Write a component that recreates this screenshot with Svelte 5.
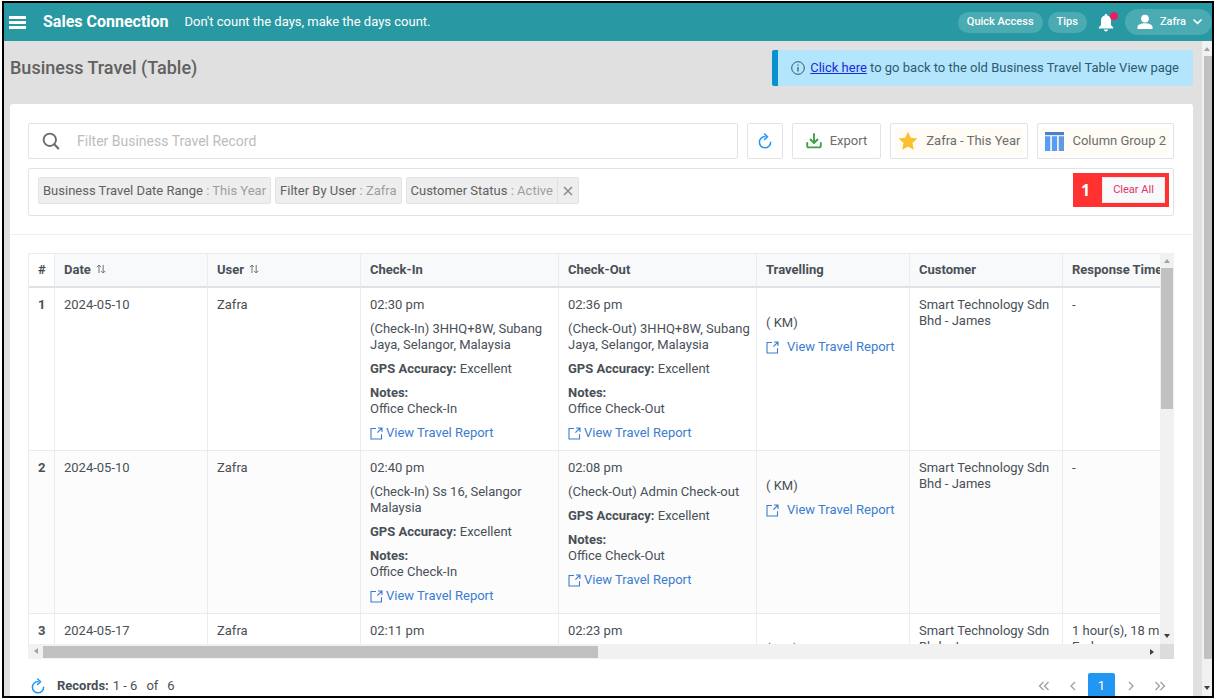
<script lang="ts">
  interface Visit {
    time: string;
    place?: string;
    note?: string;
  }
  interface TravelRecord {
    id: number;
    date: string;
    user: string;
    checkIn: Visit;
    checkOut: Visit;
    customer: string;
    response: string[];
  }

  const columns = [
    { label: '#', width: 26 },
    { label: 'Date', width: 153, sortable: true },
    { label: 'User', width: 153, sortable: true },
    { label: 'Check-In', width: 198 },
    { label: 'Check-Out', width: 198 },
    { label: 'Travelling', width: 153 },
    { label: 'Customer', width: 153 },
    { label: 'Response Time', width: 198 },
  ];
  const tableWidth = columns.reduce((sum, c) => sum + c.width, 0);

  const records: TravelRecord[] = [
    {
      id: 1,
      date: '2024-05-10',
      user: 'Zafra',
      checkIn: { time: '02:30 pm', place: '(Check-In) 3HHQ+8W, Subang Jaya, Selangor, Malaysia', note: 'Office Check-In' },
      checkOut: { time: '02:36 pm', place: '(Check-Out) 3HHQ+8W, Subang Jaya, Selangor, Malaysia', note: 'Office Check-Out' },
      customer: 'Smart Technology Sdn Bhd - James',
      response: ['-'],
    },
    {
      id: 2,
      date: '2024-05-10',
      user: 'Zafra',
      checkIn: { time: '02:40 pm', place: '(Check-In) Ss 16, Selangor Malaysia', note: 'Office Check-In' },
      checkOut: { time: '02:08 pm', place: '(Check-Out) Admin Check-out', note: 'Office Check-Out' },
      customer: 'Smart Technology Sdn Bhd - James',
      response: ['-'],
    },
    {
      id: 3,
      date: '2024-05-17',
      user: 'Zafra',
      checkIn: { time: '02:11 pm' },
      checkOut: { time: '02:23 pm' },
      customer: 'Smart Technology Sdn Bhd - James',
      response: ['1 hour(s), 18 minute(s)', 'Early'],
    },
  ];

  let filters = $state([
    { name: 'Business Travel Date Range', value: 'This Year', removable: false },
    { name: 'Filter By User', value: 'Zafra', removable: false },
    { name: 'Customer Status', value: 'Active', removable: true },
  ]);
  let query = $state('');

  function removeFilter(name: string) {
    filters = filters.filter((f) => f.name !== name);
  }
  function clearAll() {
    filters = filters.filter((f) => !f.removable);
  }
</script>

{#snippet refreshIcon()}
  <svg class="refresh-icon" viewBox="0 0 14 16" width="14" height="16" aria-hidden="true">
    <path d="M7 3.6A5.6 5.6 0 1 0 12.6 9.2" fill="none" stroke="currentColor" stroke-width="1.5" stroke-linecap="round" />
    <path d="M6.6 1l3 2.7-3 2.7" fill="none" stroke="currentColor" stroke-width="1.5" stroke-linejoin="round" stroke-linecap="round" />
  </svg>
{/snippet}

{#snippet reportLink(wide: boolean)}
  <a class="report" class:wide href="#report">
    <svg viewBox="0 0 13 13" width="13" height="13" aria-hidden="true">
      <path d="M6 1.5H1V12H11.500V7.200M8 1h4v4M12 1L7.400 5.600" fill="none" stroke="currentColor" stroke-width="1.100" />
    </svg>
    <span>View Travel Report</span>
  </a>
{/snippet}

{#snippet visit(v: Visit)}
  <div class="stack">
    <div>{v.time}</div>
    {#if v.place}
      <div>{v.place}</div>
      <div><b>GPS Accuracy:</b> Excellent</div>
      <div><b>Notes:</b><br />{v.note}</div>
      {@render reportLink(false)}
    {/if}
  </div>
{/snippet}

<div class="window">
  <header class="topbar">
    <button type="button" class="menu" aria-label="Menu"><i></i><i></i><i></i></button>
    <strong class="brand">Sales Connection</strong>
    <span class="motto">Don't count the days, make the days count.</span>
    <div class="actions">
      <button type="button" class="pill">Quick Access</button>
      <button type="button" class="pill">Tips</button>
      <button type="button" class="bell" aria-label="Notifications">
        <svg viewBox="0 0 16 19" width="16" height="19" aria-hidden="true">
          <path d="M8 1a1.3 1.3 0 0 0-1.3 1.4C4.200 3 3 5 3 7.500V12L.8 14.500V15.500H15.200V14.500L13 12V7.500C13 5 11.800 3 9.300 2.400A1.300 1.300 0 0 0 8 1zM6 16.500a2 2 0 0 0 4 0z" fill="#fff" />
        </svg>
        <span class="dot"></span>
      </button>
      <button type="button" class="account">
        <svg viewBox="0 0 16 16" width="16" height="16" aria-hidden="true">
          <circle cx="8" cy="4.600" r="3.900" fill="#fff" />
          <path d="M.5 15v-2c0-2.600 4-3.800 7.500-3.800s7.500 1.200 7.500 3.800v2z" fill="#fff" />
        </svg>
        Zafra
        <svg viewBox="0 0 9 6" width="9" height="6" aria-hidden="true">
          <path d="M1 1l3.500 3.400L8 1" fill="none" stroke="#fff" stroke-width="1.700" stroke-linecap="round" />
        </svg>
      </button>
    </div>
  </header>

  <div class="body">
    <main>
      <div class="heading">
        <h1>Business Travel (Table)</h1>
        <p class="notice">
          <svg viewBox="0 0 14 14" width="14" height="14" aria-hidden="true">
            <circle cx="7" cy="7" r="6.300" fill="none" stroke="currentColor" />
            <path d="M7 6v4.500M7 3.400v1.300" stroke="currentColor" stroke-width="1.200" />
          </svg>
          <span><a href="#old">Click here</a> to go back to the old Business Travel Table View page</span>
        </p>
      </div>

      <section class="card">
        <div class="controls">
          <div class="toolbar">
            <label class="search">
              <svg viewBox="0 0 18 18" width="18" height="18" aria-hidden="true">
                <circle cx="7.800" cy="7.800" r="6.200" fill="none" stroke="#6c6c6c" stroke-width="1.900" />
                <path d="M12.300 12.300l4 4.200" stroke="#6c6c6c" stroke-width="2" stroke-linecap="round" />
              </svg>
              <input type="text" bind:value={query} placeholder="Filter Business Travel Record" aria-label="Filter Business Travel Record" />
            </label>
            <button type="button" class="tool square" aria-label="Refresh">{@render refreshIcon()}</button>
            <button type="button" class="tool export">
              <svg viewBox="0 0 16 16" width="16" height="16" aria-hidden="true">
                <path d="M8 1v8.500M4.500 6.500L8 10l3.500-3.500M1.200 10v2.800c0 1 .6 1.600 1.600 1.600h10.400c1 0 1.600-.6 1.600-1.600V10" fill="none" stroke="#43a047" stroke-width="1.900" stroke-linecap="round" stroke-linejoin="round" />
              </svg>
              Export
            </button>
            <button type="button" class="tool tinted">
              <span>
                <svg viewBox="0 0 20 20" width="20" height="20" aria-hidden="true">
                  <path d="M10 .8l2.800 6 6.500.8-4.800 4.500 1.300 6.600L10 15.500l-5.800 3.200 1.300-6.600L.7 7.600l6.500-.8z" fill="#fbc02d" />
                </svg>
                Zafra - This Year
              </span>
            </button>
            <button type="button" class="tool tinted">
              <span>
                <svg viewBox="0 0 18 18" width="19" height="19" aria-hidden="true">
                  <path d="M0 0h18v3H0z" fill="#4a82cf" />
                  <path d="M0 4h5v14H0zM6.500 4h5v14h-5z" fill="#559df8" />
                  <path d="M13 4h5v14h-5z" fill="#6399e0" />
                </svg>
                Column Group 2
              </span>
            </button>
          </div>

          <div class="filters">
            <div class="chips">
              {#each filters as f (f.name)}
                <div class="chip">
                  <span>{f.name} <em>:</em> <em>{f.value}</em></span>
                  {#if f.removable}
                    <button type="button" aria-label="Remove {f.name}" onclick={() => removeFilter(f.name)}>
                      <svg viewBox="0 0 10 10" width="10" height="10" aria-hidden="true">
                        <path d="M1 1l8 8M9 1L1 9" stroke="#8e8e8e" stroke-width="1.600" />
                      </svg>
                    </button>
                  {/if}
                </div>
              {/each}
            </div>
            <div class="step">
              <span class="step-number">1</span>
              <button type="button" onclick={clearAll}>Clear All</button>
            </div>
          </div>
        </div>

        <div class="grid">
          <div class="viewport">
            <table style="width: {tableWidth}px">
              <colgroup>
                {#each columns as c (c.label)}
                  <col style="width: {c.width}px" />
                {/each}
              </colgroup>
              <thead>
                <tr>
                  {#each columns as c (c.label)}
                    <th scope="col">
                      {c.label}
                      {#if c.sortable}
                        <svg class="sort" viewBox="0 0 10 10" width="10" height="10" aria-hidden="true">
                          <path d="M3 9V1M.8 3.200L3 1l1.800 2M7.200 1v8M5.200 7l2 2 2.200-2.200" fill="none" stroke="#757575" />
                        </svg>
                      {/if}
                    </th>
                  {/each}
                </tr>
              </thead>
              <tbody>
                {#each records as r (r.id)}
                  <tr>
                    <th scope="row">{r.id}</th>
                    <td>{r.date}</td>
                    <td>{r.user}</td>
                    <td>{@render visit(r.checkIn)}</td>
                    <td>{@render visit(r.checkOut)}</td>
                    <td>
                      <div class="stack travelling">
                        <div>( KM)</div>
                        {@render reportLink(true)}
                      </div>
                    </td>
                    <td>{r.customer}</td>
                    <td>
                      {#each r.response as line}
                        <div>{line}</div>
                      {/each}
                    </td>
                  </tr>
                {/each}
              </tbody>
            </table>
          </div>
          <div class="bar vertical" aria-hidden="true">
            <i class="arrow up"></i>
            <i class="thumb" style="flex-basis: 36%"></i>
            <i class="arrow down active"></i>
          </div>
          <div class="bar horizontal" aria-hidden="true">
            <i class="arrow left"></i>
            <i class="thumb" style="flex-basis: 49%"></i>
            <i class="arrow right active"></i>
          </div>
          <div class="corner"></div>
        </div>

        <footer>
          <button type="button" class="reload" aria-label="Reload records">{@render refreshIcon()}</button>
          <b>Records:</b>
          <span class="count"><span>1 - 6</span><span>of</span><span>6</span></span>
          <nav class="pager" aria-label="Pagination">
            <button type="button" aria-label="First page">
              <svg viewBox="0 0 12 10" width="12" height="10" aria-hidden="true"><path d="M5.500 1L1.500 5l4 4M10.500 1l-4 4 4 4" /></svg>
            </button>
            <button type="button" aria-label="Previous page">
              <svg viewBox="0 0 6 10" width="6" height="10" aria-hidden="true"><path d="M5 1L1 5l4 4" /></svg>
            </button>
            <button type="button" class="current" aria-current="page">1</button>
            <button type="button" aria-label="Next page">
              <svg viewBox="0 0 6 10" width="6" height="10" aria-hidden="true"><path d="M1 1l4 4-4 4" /></svg>
            </button>
            <button type="button" aria-label="Last page">
              <svg viewBox="0 0 12 10" width="12" height="10" aria-hidden="true"><path d="M1.500 1l4 4-4 4M6.500 1l4 4-4 4" /></svg>
            </button>
          </nav>
        </footer>
      </section>
    </main>

    <div class="bar vertical page-bar" aria-hidden="true">
      <i class="arrow up"></i>
      <i class="thumb" style="flex-basis: 92%"></i>
      <i class="arrow down active"></i>
    </div>
  </div>
</div>

<style>
  :global(body) {
    background: #fff;
    overflow: hidden;
  }
  .window,
  .window * {
    box-sizing: border-box;
  }
  .window {
    display: flex;
    flex-direction: column;
    height: calc(100vh - 3px);
    margin: 1px 1px 2px 2px;
    border: 2px solid #000;
    overflow: hidden;
    font: 13px/16px Roboto, sans-serif;
    color: #495057;
  }
  button {
    border: 0;
    padding: 0;
    background: none;
    font: inherit;
    color: inherit;
    cursor: pointer;
  }
  svg {
    flex: none;
    display: block;
  }

  .topbar {
    display: flex;
    align-items: center;
    flex: none;
    height: 38px;
    padding-left: 5px;
    background: #2899a3;
    color: #fff;
  }
  .menu {
    display: flex;
    flex-direction: column;
    gap: 2px;
    width: 17px;
    margin-right: 17px;
  }
  .menu i {
    height: 3px;
    background: #fff;
  }
  .brand {
    margin-right: 16px;
    font-size: 16px;
    font-weight: 700;
  }
  .actions {
    display: flex;
    align-items: center;
    gap: 5px;
    margin-left: auto;
    font-size: 11px;
    font-weight: 500;
  }
  .pill {
    height: 21px;
    padding: 0 9px;
    border-radius: 11px;
    background: #4babb3;
  }
  .bell {
    position: relative;
    margin: 0 6px;
  }
  .dot {
    position: absolute;
    top: -1px;
    right: -4px;
    width: 8px;
    height: 8px;
    border-radius: 50%;
    background: #e91e63;
  }
  .account {
    display: flex;
    align-items: center;
    gap: 7px;
    height: 26px;
    padding: 0 10px 0 12px;
    border-radius: 13px;
    background: #4babb3;
  }

  .body {
    display: flex;
    flex: 1;
    min-height: 0;
    background: #e0e0e0;
  }
  main {
    flex: 1;
    min-width: 0;
    padding: 9px 9px 0 6px;
    overflow: hidden;
  }
  .heading {
    display: flex;
    align-items: center;
    justify-content: space-between;
    margin-bottom: 18px;
  }
  h1 {
    margin: 0;
    font-size: 18px;
    font-weight: 500;
    color: #616161;
  }
  .notice {
    display: flex;
    align-items: center;
    gap: 5px;
    height: 36px;
    margin: 0;
    padding: 0 14px 0 13px;
    border-left: 6px solid #0891cf;
    border-radius: 2px;
    background: #b3e5fc;
    color: #2c5a70;
  }
  .notice a {
    color: #1a2be0;
  }

  .card {
    border-radius: 3px 3px 0 0;
    background: #fff;
  }
  .controls {
    padding: 19px 19px 18px 18px;
    border-bottom: 1px solid #f0f0f0;
  }
  .toolbar {
    display: flex;
    gap: 9px;
    margin-bottom: 9px;
    color: #6c6c6c;
  }
  .search {
    display: flex;
    align-items: center;
    flex: 1;
    gap: 17px;
    height: 36px;
    padding: 0 13px;
    border: 1px solid #e3e3e5;
    border-radius: 2px;
    font-size: 14px;
  }
  .search input {
    flex: 1;
    min-width: 0;
    padding: 0;
    border: 0;
    outline: 0;
    font: inherit;
    color: inherit;
  }
  .search input::placeholder {
    color: #bdbdbd;
  }
  .tool {
    display: flex;
    align-items: center;
    justify-content: center;
    gap: 8px;
    height: 36px;
    border: 1px solid #e3e3e5;
    border-radius: 2px;
  }
  .square {
    width: 36px;
  }
  .refresh-icon {
    color: #2196f3;
  }
  .export {
    padding: 0 13px;
  }
  .tinted {
    padding: 0 4px;
  }
  .tinted span {
    display: flex;
    align-items: center;
    gap: 8px;
    height: 27px;
    padding: 0 3px;
    background: #fffcf5;
  }

  .filters {
    display: flex;
    justify-content: space-between;
    align-items: flex-start;
    min-height: 48px;
    padding: 4px 4px 8px 9px;
    border: 1px solid #e3e3e5;
    border-radius: 2px;
  }
  .chips {
    display: flex;
    flex-wrap: wrap;
    gap: 4px;
    padding-top: 4px;
  }
  .chip {
    display: flex;
    height: 27px;
    border: 1px solid #e3e3e3;
    border-radius: 2px;
    background: #eee;
    color: #616161;
    line-height: 25px;
  }
  .chip span {
    padding: 0 4px;
  }
  .chip em {
    font-style: normal;
    color: #9e9e9e;
  }
  .chip button {
    display: grid;
    place-items: center;
    width: 21px;
    border-left: 1px solid #e0e0e0;
  }
  .step {
    display: flex;
    align-items: center;
    height: 34px;
    padding-right: 4px;
    background: #ff3131;
  }
  .step-number {
    width: 25px;
    text-align: center;
    font: 700 16px/34px "Open Sans", sans-serif;
    color: #fff;
  }
  .step button {
    width: 63px;
    height: 26px;
    margin-left: 4px;
    border: 1px solid #e9ebec;
    background: #f8f9fa;
    font-size: 11px;
    color: #e0336c;
  }

  .grid {
    display: grid;
    grid-template: minmax(0, 391px) 15px / minmax(0, 1fr) 14px;
    margin: 18px 19px 0 18px;
  }
  .viewport {
    overflow: auto;
    scrollbar-width: none;
  }
  table {
    table-layout: fixed;
    border-spacing: 0;
    border-left: 1px solid #e9ecef;
  }
  th,
  td {
    padding: 9px 4px 9px 9px;
    border-right: 1px solid #e9ecef;
    border-bottom: 1px solid #e9ecef;
    text-align: left;
    vertical-align: top;
    font-weight: 400;
  }
  thead th {
    position: sticky;
    top: 0;
    height: 35px;
    padding: 0 4px 0 9px;
    border-top: 1px solid #e9ecef;
    border-bottom: 2px solid #dfe2e6;
    background: #f8f9fa;
    vertical-align: middle;
    font-weight: 700;
  }
  thead th:first-child {
    background: #fff;
  }
  tbody th {
    font-weight: 700;
  }
  tbody tr:nth-child(even) {
    background: #fcfcfc;
  }
  b {
    font-weight: 700;
  }
  .sort {
    display: inline-block;
    margin-left: 2px;
  }
  .stack {
    display: flex;
    flex-direction: column;
    gap: 8px;
  }
  .travelling {
    padding-top: 18px;
  }
  .report {
    display: flex;
    align-items: center;
    gap: 3px;
    color: #3b7dd0;
    text-decoration: none;
  }
  .report.wide {
    gap: 8px;
  }

  .bar {
    display: flex;
    align-items: center;
    background: #f1f1f1;
  }
  .vertical {
    flex-direction: column;
  }
  .thumb {
    margin-right: auto;
    background: #c1c1c1;
  }
  .vertical .thumb {
    width: 12px;
    margin: 0 auto auto;
  }
  .horizontal .thumb {
    align-self: stretch;
    margin: 2px auto 1px 0;
  }
  .arrow {
    display: grid;
    place-items: center;
    flex: none;
    width: 15px;
    height: 15px;
  }
  .arrow::before {
    content: '';
    border: 3px solid transparent;
    border-bottom: 4px solid #a3a3a3;
    border-top: 0;
  }
  .arrow.active::before {
    border-bottom-color: #404040;
  }
  .down {
    rotate: 180deg;
  }
  .left {
    rotate: -90deg;
  }
  .right {
    rotate: 90deg;
  }
  .corner {
    background: #dcdcdc;
  }
  .page-bar {
    flex: none;
    width: 10px;
  }
  .page-bar .thumb {
    width: 8px;
    margin: 0 0 auto auto;
  }
  .page-bar .arrow {
    width: 10px;
  }

  footer {
    display: flex;
    align-items: center;
    height: 54px;
    padding: 0 20px 0 21px;
  }
  .reload {
    margin-right: 12px;
  }
  .count {
    display: flex;
    gap: 9px;
    margin-left: 4px;
  }
  .pager {
    display: flex;
    align-items: center;
    gap: 2px;
    margin-left: auto;
  }
  .pager button {
    display: grid;
    place-items: center;
    width: 27px;
    height: 27px;
    border-radius: 2px;
  }
  .pager path {
    fill: none;
    stroke: #9e9e9e;
    stroke-width: 1.3;
  }
  .pager .current {
    background: #2196f3;
    color: #fff;
  }
</style>
